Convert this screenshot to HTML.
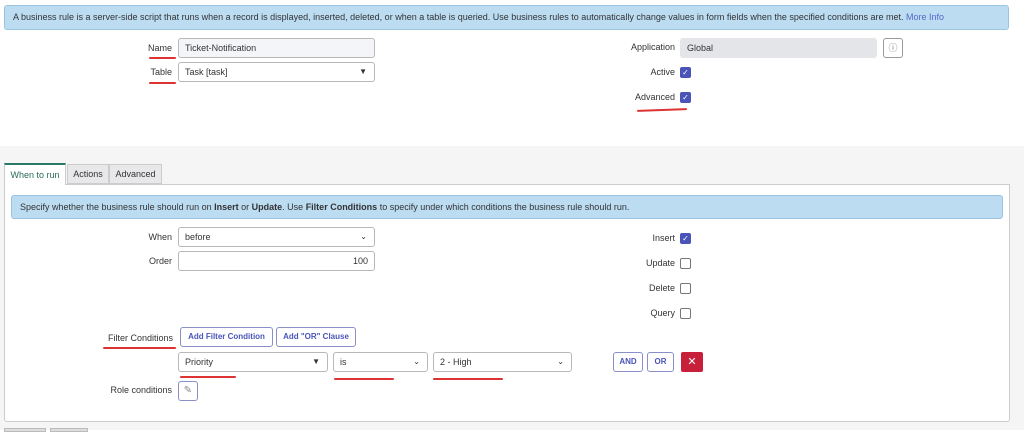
<!DOCTYPE html>
<html><head><style>
*{box-sizing:border-box;margin:0;padding:0}
body{width:1024px;height:430px;overflow:hidden;background:#fff;font-family:"Liberation Sans",sans-serif;font-size:9px;color:#333;position:relative}
.a{position:absolute}
.info{background:#bcdcf2;border:1px solid #9cc4e0;border-radius:3px;padding:0 8px;line-height:22px;color:#333}
.lbl{text-align:right;width:100px;line-height:20px}
.inp{border:1px solid #b8b8b8;border-radius:3px;height:20px;line-height:18px;padding:0 6px;background:#fff}
.cb{width:11px;height:11px;border:1px solid #777;border-radius:2px;background:#fff}
.cb.on{background:#4a54b8;border-color:#4a54b8;color:#fff;font-size:8px;line-height:9px;text-align:center}
.red{background:#d33;height:1.5px;border-radius:1px}
.btn{border:1px solid #8a8fc8;border-radius:3px;color:#4a54b8;font-weight:bold;font-size:8px;height:20px;line-height:18px;text-align:center;background:#fff;white-space:nowrap;overflow:hidden}
.arr{position:absolute;right:7px;top:0;font-size:8px}
</style></head><body>
<div class="a info" style="left:4px;top:5px;width:1005px;height:25px">A business rule is a server-side script that runs when a record is displayed, inserted, deleted, or when a table is queried. Use business rules to automatically change values in form fields when the specified conditions are met. <span style="color:#5468c8">More Info</span></div>

<div class="a lbl" style="left:72px;top:38px">Name</div>
<div class="a inp" style="left:178px;top:38px;width:197px;background:#f4f5f8">Ticket-Notification</div>
<div class="a red" style="left:149px;top:57px;width:27px"></div>
<div class="a lbl" style="left:72px;top:62px">Table</div>
<div class="a inp" style="left:178px;top:62px;width:197px">Task [task]<span class="arr">▼</span></div>
<div class="a red" style="left:149px;top:82px;width:27px"></div>

<div class="a lbl" style="left:575px;top:37px">Application</div>
<div class="a inp" style="left:680px;top:38px;width:197px;background:#e4e5e8;border-color:#e4e5e8">Global</div>
<div class="a" style="left:883px;top:38px;width:20px;height:20px;border:1px solid #999;border-radius:3px;text-align:center;line-height:18px;font-size:9px;color:#777">ⓘ</div>
<div class="a lbl" style="left:575px;top:62px">Active</div>
<div class="a cb on" style="left:680px;top:67px">✓</div>
<div class="a lbl" style="left:575px;top:87px">Advanced</div>
<div class="a cb on" style="left:680px;top:92px">✓</div>
<div class="a red" style="left:637px;top:109px;width:50px;transform:rotate(-2deg)"></div>

<div class="a" style="left:0;top:146px;width:1024px;height:284px;background:#f5f5f6"></div>
<div class="a" style="left:4px;top:163px;width:62px;height:22px;background:#fff;border:1px solid #ccc;border-top:2px solid #2a7a6a;border-bottom:none;color:#2a6a5a;line-height:20px;text-align:center;z-index:2">When to run</div>
<div class="a" style="left:67px;top:164px;width:42px;height:20px;background:#e8e8ea;border:1px solid #ccc;line-height:18px;text-align:center">Actions</div>
<div class="a" style="left:109px;top:164px;width:53px;height:20px;background:#e8e8ea;border:1px solid #ccc;line-height:18px;text-align:center">Advanced</div>
<div class="a" style="left:4px;top:184px;width:1006px;height:238px;background:#fff;border:1px solid #ccc;border-radius:0 0 3px 3px"></div>
<div class="a info" style="left:11px;top:195px;width:992px;height:24px;line-height:22px">Specify whether the business rule should run on <b>Insert</b> or <b>Update</b>. Use <b>Filter Conditions</b> to specify under which conditions the business rule should run.</div>

<div class="a lbl" style="left:72px;top:227px">When</div>
<div class="a inp" style="left:178px;top:227px;width:197px">before<span class="arr">⌄</span></div>
<div class="a lbl" style="left:72px;top:251px">Order</div>
<div class="a inp" style="left:178px;top:251px;width:197px;text-align:right">100</div>

<div class="a lbl" style="left:575px;top:228px">Insert</div>
<div class="a cb on" style="left:680px;top:233px">✓</div>
<div class="a lbl" style="left:575px;top:253px">Update</div>
<div class="a cb" style="left:680px;top:258px"></div>
<div class="a lbl" style="left:575px;top:278px">Delete</div>
<div class="a cb" style="left:680px;top:283px"></div>
<div class="a lbl" style="left:575px;top:303px">Query</div>
<div class="a cb" style="left:680px;top:308px"></div>

<div class="a lbl" style="left:73px;top:328px">Filter Conditions</div>
<div class="a red" style="left:103px;top:347px;width:73px"></div>
<div class="a btn" style="left:180px;top:327px;width:93px">Add Filter Condition</div>
<div class="a btn" style="left:276px;top:327px;width:80px">Add "OR" Clause</div>
<div class="a inp" style="left:178px;top:352px;width:150px">Priority<span class="arr">▼</span></div>
<div class="a red" style="left:180px;top:376px;width:56px"></div>
<div class="a inp" style="left:333px;top:352px;width:95px">is<span class="arr">⌄</span></div>
<div class="a red" style="left:334px;top:378px;width:60px"></div>
<div class="a inp" style="left:433px;top:352px;width:139px">2 - High<span class="arr">⌄</span></div>
<div class="a red" style="left:433px;top:378px;width:70px"></div>
<div class="a btn" style="left:613px;top:352px;width:30px">AND</div>
<div class="a btn" style="left:647px;top:352px;width:27px">OR</div>
<div class="a" style="left:681px;top:352px;width:22px;height:20px;background:#c8203a;border-radius:2px;color:#fff;text-align:center;line-height:20px;font-size:11px">✕</div>
<div class="a lbl" style="left:72px;top:380px">Role conditions</div>
<div class="a" style="left:178px;top:381px;width:20px;height:20px;border:1px solid #8a8fc8;border-radius:3px;text-align:center;line-height:18px;color:#888;font-size:10px">✎</div>

<div class="a" style="left:4px;top:428px;width:42px;height:4px;background:#ddd;border:1px solid #bbb"></div>
<div class="a" style="left:50px;top:428px;width:38px;height:4px;background:#ddd;border:1px solid #bbb"></div>
</body></html>
